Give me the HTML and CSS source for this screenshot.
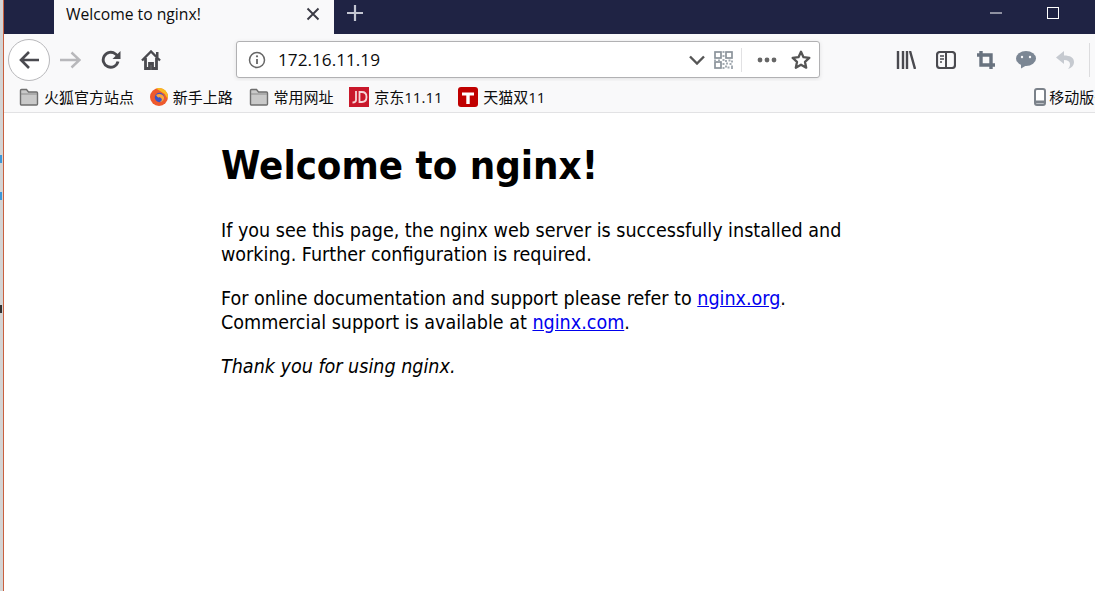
FILE: index.html
```html
<!DOCTYPE html>
<html lang="zh">
<head>
<meta charset="utf-8">
<title>Welcome to nginx!</title>
<link rel="stylesheet" href="styles.css">
</head>
<body>
<div class="window">
  <div class="edge">
    <span class="edge-mark edge-blue-a"></span>
    <span class="edge-mark edge-blue-b"></span>
    <span class="edge-mark edge-dark"></span>
  </div>
  <div class="browser">
    <header class="tabbar">
      <div class="tab">
        <span class="tab-title">Welcome to nginx!</span>
        <svg class="tab-close" width="14" height="14" viewBox="0 0 14 14"><path d="M1.500 1.500l11 11M12.500 1.500l-11 11" stroke="#3a3a44" stroke-width="1.900" fill="none"/></svg>
      </div>
      <svg class="new-tab" width="18" height="18" viewBox="0 0 18 18"><path d="M9 1v16M1 9h16" stroke="#c4c6d2" stroke-width="2.200" fill="none"/></svg>
      <div class="win-controls">
        <svg class="win-min" width="12" height="2" viewBox="0 0 12 2"><path d="M0 1h12" stroke="#fff" stroke-width="1"/></svg>
        <svg class="win-max" width="12" height="12" viewBox="0 0 12 12"><rect x=".5" y=".5" width="11" height="11" fill="none" stroke="#fff"/></svg>
      </div>
    </header>
    <nav class="toolbar">
      <button class="back">
        <svg width="22" height="20" viewBox="0 0 22 20"><path d="M21 10H3M11 2l-8 8 8 8" stroke="#4a4a4f" stroke-width="2.600" fill="none"/></svg>
      </button>
      <svg class="forward" width="22" height="18" viewBox="0 0 22 18"><path d="M1 9h19M12.500 1.500l8 7.500-8 7.500" stroke="#b8b8bb" stroke-width="2.400" fill="none"/></svg>
      <svg class="reload" width="20" height="20" viewBox="0 0 20 20"><path d="M17 11.500A7.500 7.500 0 1 1 14.500 4L18 6.800" stroke="#4a4a4f" stroke-width="2.900" fill="none"/><path d="M19.500 1v8h-8z" fill="#4a4a4f"/></svg>
      <svg class="home" width="20" height="20" viewBox="0 0 20 20"><path d="M1 10.500l9-9 9 9" stroke="#4a4a4f" stroke-width="2.400" fill="none"/><path d="M4.500 8v10.500h4v-5h3v5h4V8" stroke="#4a4a4f" stroke-width="2.800" fill="none"/><path d="M15 2h2.500v5H15z" fill="#4a4a4f"/></svg>
      <div class="urlbar">
        <svg class="info" width="18" height="18" viewBox="0 0 18 18"><circle cx="9" cy="9" r="7.500" fill="none" stroke="#666" stroke-width="1.500"/><path d="M9 8v5" stroke="#666" stroke-width="1.800"/><circle cx="9" cy="5.300" r="1.100" fill="#666"/></svg>
        <span class="url">172.16.11.19</span>
        <svg class="chevron" width="16" height="10" viewBox="0 0 16 10"><path d="M1 1.500l7 7 7-7" stroke="#555" stroke-width="2.400" fill="none"/></svg>
        <svg class="qr" width="19" height="18" viewBox="0 0 19 18"><g fill="none" stroke="#8b939b" stroke-width="1.700"><rect x="1" y="1" width="6" height="6"/><rect x="12" y="1" width="6" height="6"/><rect x="1" y="11" width="6" height="6"/></g><path fill="#a4abb2" d="M8.500 0h2v2h-2zM8.500 4h2v2h-2zM0 8.500h2v2H0zM4 8.500h2v2H4zM8.500 8h2v2h-2zM11 9h2v2h-2zM14.500 8.500h2v2h-2zM17 9.500h2v2h-2zM8.500 12h2v2h-2zM12 11.500h2v2h-2zM15.500 12h2v2h-2zM8.500 16h2v2h-2zM11 14.500h2v2h-2zM13.500 15.500h2v2h-2zM17 14.500h2v3.500h-2z"/></svg>
        <span class="url-sep"></span>
        <svg class="dots" width="20" height="6" viewBox="0 0 20 6"><circle cx="3" cy="3" r="2.400" fill="#666"/><circle cx="10" cy="3" r="2.400" fill="#666"/><circle cx="17" cy="3" r="2.400" fill="#666"/></svg>
        <svg class="star" width="20" height="19" viewBox="0 0 20 19"><path d="M10 1.800l2.500 5.400 5.800.7-4.300 4 1.200 5.800-5.200-3-5.200 3 1.200-5.800-4.300-4 5.800-.7z" fill="none" stroke="#555" stroke-width="2.300" stroke-linejoin="round"/></svg>
      </div>
      <div class="tools">
        <svg width="20" height="18" viewBox="0 0 20 18"><path d="M2 0v18M7 0v18M11 0v18M14 0l5 18" stroke="#4a4a4f" stroke-width="2.400" fill="none"/></svg>
        <svg width="20" height="18" viewBox="0 0 20 18"><rect x="1" y="1" width="18" height="16" rx="3" fill="none" stroke="#4a4a4f" stroke-width="2.200"/><path d="M10 1v16" stroke="#4a4a4f" stroke-width="2"/><path d="M4 5h4M4 8h4M4 11h2" stroke="#4a4a4f" stroke-width="1.300"/></svg>
        <svg width="20" height="20" viewBox="0 0 20 20"><path d="M5 1v14h14M1 5h14v14" fill="none" stroke="#69737f" stroke-width="3.400"/></svg>
        <svg width="20" height="18" viewBox="0 0 20 18"><ellipse cx="10" cy="7.500" rx="10" ry="7.500" fill="#7c8794"/><path d="M5 12.500v5l6-3.500z" fill="#7c8794"/><circle cx="6" cy="6" r="1.200" fill="#f9f9fa"/><circle cx="14" cy="6" r="1.200" fill="#f9f9fa"/></svg>
        <svg width="18" height="18" viewBox="0 0 18 18"><path d="M8 0L0 6.500 8 13V9c4 0 6 1.500 6 4.500 0 1.800-1 3.200-2 4.500 3.500-1 6-3.500 6-7 0-4.500-4-6.500-10-6.500z" fill="#c6cad0"/></svg>
      </div>
      <span class="tool-sep"></span>
    </nav>
    <div class="bookmarks">
      <a class="bm">
        <svg width="20" height="18" viewBox="0 0 20 18"><path d="M1.500 16V2.500A1 1 0 0 1 2.500 1.500h5l2 2.500h8a1 1 0 0 1 1 1V16a1 1 0 0 1-1 1h-15a1 1 0 0 1-1-1z" fill="#c9c9c9" stroke="#6e6e6e" stroke-width="1.400"/><path d="M2 6h16" stroke="#8d8d8d"/></svg>
        <span>火狐官方站点</span>
      </a>
      <a class="bm bm-fx">
        <svg width="18" height="18" viewBox="0 0 18 18"><circle cx="9" cy="9" r="9" fill="#ee5a2e"/><path d="M6 .5A9 9 0 0 1 18 8l-.3 3-3-5L10 3z" fill="#f9b821"/><circle cx="9.500" cy="9.500" r="4.700" fill="#3c52c8"/><path d="M6 7c3-2 7-1 8 2 .5 3-2 5-4 5 2-1 2.500-3 1-4-1-.5-3 .5-5-3z" fill="#ffa436"/></svg>
        <span>新手上路</span>
      </a>
      <a class="bm">
        <svg width="20" height="18" viewBox="0 0 20 18"><path d="M1.500 16V2.500A1 1 0 0 1 2.500 1.500h5l2 2.500h8a1 1 0 0 1 1 1V16a1 1 0 0 1-1 1h-15a1 1 0 0 1-1-1z" fill="#c9c9c9" stroke="#6e6e6e" stroke-width="1.400"/><path d="M2 6h16" stroke="#8d8d8d"/></svg>
        <span>常用网址</span>
      </a>
      <a class="bm">
        <svg width="20" height="20" viewBox="0 0 20 20"><rect width="20" height="20" fill="#c9182b"/><path d="M7 4v9c0 1.800-1 2.500-3.500 2.500" fill="none" stroke="#f7d5d8" stroke-width="1.800"/><path d="M10.500 5h2.300c3 0 4.700 2 4.700 5s-1.700 5-4.700 5h-2.300z" fill="none" stroke="#f7d5d8" stroke-width="1.800"/></svg>
        <span>京东11.11</span>
      </a>
      <a class="bm">
        <svg width="20" height="20" viewBox="0 0 20 20"><rect width="20" height="20" rx="3" fill="#c00000"/><path d="M4 5.500h12v3h-4.300V17H8.300V8.500H4z" fill="#fff"/></svg>
        <span>天猫双11</span>
      </a>
      <a class="bm bm-mobile">
        <svg width="12" height="18" viewBox="0 0 12 18"><rect x="1" y="1" width="10" height="16" rx="2" fill="#fff" stroke="#7b828a" stroke-width="2"/><path d="M1 14h10" stroke="#7b828a" stroke-width="3"/></svg>
        <span>移动版书签</span>
      </a>
    </div>
    <main class="page">
      <h1>Welcome to nginx!</h1>
      <p>If you see this page, the nginx web server is successfully installed and working. Further configuration is required.</p>
      <p>For online documentation and support please refer to <a href="#">nginx.org</a>.<br>Commercial support is available at <a href="#">nginx.com</a>.</p>
      <p><em>Thank you for using nginx.</em></p>
    </main>
  </div>
</div>
</body>
</html>
```

FILE: styles.css
```css
* { box-sizing: border-box; }
html, body { margin: 0; height: 100%; overflow: hidden; background: #fff; }
.window { display: flex; width: 1095px; height: 591px; }
.edge { position: relative; flex: 0 0 4px; background: #d4d4d4; border-right: 1px solid #c9603f; }
.edge-mark { position: absolute; left: 0; width: 2px; height: 8px; }
.edge-blue-a { top: 155px; background: #3d97d8; }
.edge-blue-b { top: 192px; background: #3d97d8; }
.edge-dark { top: 305px; background: #333; }
.browser { flex: 1; min-width: 0; display: flex; flex-direction: column; }

.tabbar { flex: 0 0 34px; display: flex; align-items: center; background: #1f2344; padding-left: 50px; }
.tab { flex: 0 0 280px; height: 34px; display: flex; align-items: center; justify-content: space-between; background: #f9f9fa; padding: 0 14px 6px 12px; }
.tab-title { font: 15.700px "Open Sans", "Noto Sans", sans-serif; color: #0c0c0d; }
.new-tab { margin: 0 0 8px 12px; }
.win-controls { display: flex; align-items: flex-start; gap: 45px; margin-left: auto; margin-right: 36px; height: 34px; padding-top: 7px; }
.win-min { margin-top: 5px; }

.toolbar { flex: 0 0 47px; display: flex; align-items: center; background: #f9f9fa; padding: 4px 0 0 4px; }
.back { width: 42px; height: 42px; padding: 0; display: flex; align-items: center; justify-content: center; border: 1px solid #b8b8bb; border-radius: 50%; background: #fff; }
.forward { margin-left: 9px; }
.reload { margin-left: 20px; }
.home { margin-left: 20px; }
.urlbar { width: 584px; height: 37px; margin-left: 75px; display: flex; align-items: center; background: #fff; border: 1px solid #b1b1b3; border-radius: 3px; box-shadow: 0 1px 4px rgba(0,0,0,.1); padding-left: 11px; }
.url { font: 17.200px "Open Sans", "Noto Sans", sans-serif; color: #0c0c0d; margin-left: 12px; flex: 1; }
.chevron { margin-right: 9px; }
.qr { margin-right: 8px; }
.url-sep { width: 1px; height: 24px; background: #e1e1e3; }
.dots { margin-left: 15px; }
.star { margin-left: 14px; margin-right: 8px; }
.tools { display: flex; align-items: center; gap: 20px; margin-left: 76px; }
.tool-sep { width: 1px; height: 34px; background: #dcdcde; margin-left: 15px; }

.bookmarks { flex: 0 0 32px; display: flex; align-items: center; background: #f9f9fa; border-bottom: 1px solid #e2e2e4; padding-left: 15px; gap: 15.750px; overflow: hidden; white-space: nowrap; }
.bm { display: flex; align-items: center; gap: 5px; font: 15px/20px "Open Sans", "Noto Sans CJK SC", sans-serif; color: #0c0c0d; }
.bm svg { flex: none; }
.bm-mobile { margin-left: 473px; gap: 3px; }

.page { flex: 1; min-height: 0; background: #fff; font: 19.550px/24px "DejaVu Sans Condensed", "DejaVu Sans", sans-serif; color: #000; width: 672px; margin-left: 217px; padding: 0; }
.page h1 { margin: 28px 0 0; font-size: 39.800px; line-height: 48px; font-weight: 700; }
.page p { margin: 20px 0 0; }
.page p:first-of-type { margin-top: 30px; }
.page a { color: #0000ee; text-decoration: underline; }
```
